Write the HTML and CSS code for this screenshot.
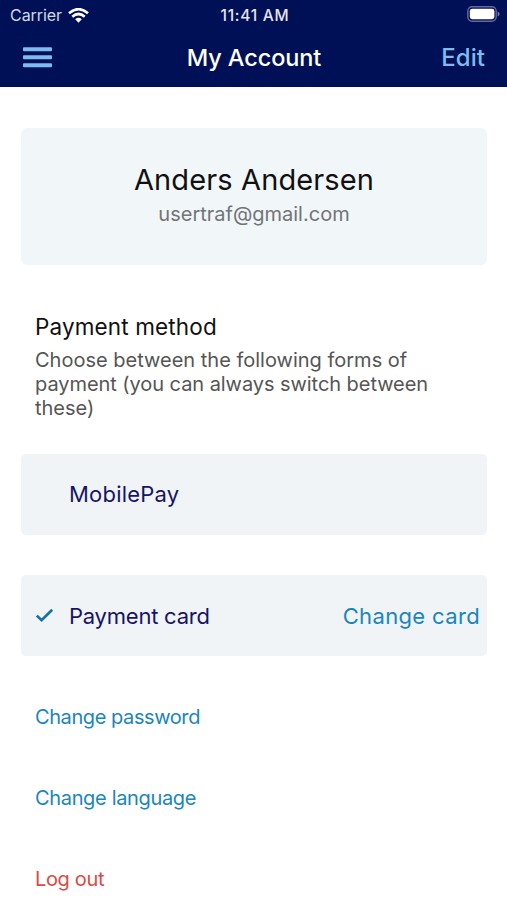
FILE: index.html
```html
<!DOCTYPE html>
<html lang="en">
<head>
<meta charset="utf-8">
<title>My Account</title>
<link rel="stylesheet" href="styles.css">
</head>
<body>
<header class="header">
  <div class="status">
    <div class="carrier"><span class="carrier-name">Carrier</span>
      <svg class="wifi" width="21" height="15" viewBox="0 0 21 15" fill="none" stroke="#fff" stroke-width="2.7"><path d="M1 5.2Q10.5-2.8 20 5.2"/><path d="M4.3 8.7Q10.5 3.3 16.7 8.7"/><path d="M7.2 11.2Q10.5 8.4 13.8 11.2L10.5 14.7Z" fill="#fff" stroke="none"/></svg>
    </div>
    <span class="time">11:41 AM</span>
    <svg class="battery" width="33" height="16" viewBox="0 0 33 16"><rect x=".8" y=".8" width="28.4" height="14.4" rx="4.4" fill="none" stroke="#66699a" stroke-width="1.4"/><rect x="2.8" y="2.8" width="24.6" height="10.4" rx="2.4" fill="#fff"/><path d="M30.7 5.6Q32.6 6.2 32.6 8T30.7 10.4Z" fill="#777aa6"/></svg>
  </div>
  <nav class="nav">
    <svg class="menu" width="29" height="22" viewBox="0 0 29 22" fill="#7dbcef"><rect y=".3" width="29" height="4" rx="1"/><rect y="8.3" width="29" height="4" rx="1"/><rect y="16.3" width="29" height="4" rx="1"/></svg>
    <h1 class="title">My Account</h1>
    <a class="edit">Edit</a>
  </nav>
</header>
<main class="main">
  <section class="profile">
    <h2 class="name">Anders Andersen</h2>
    <p class="email">usertraf@gmail.com</p>
  </section>
  <section class="intro">
    <h3 class="heading">Payment method</h3>
    <p class="copy">Choose between the following forms of<br><span class="line2">payment (you can always switch between</span><br>these)</p>
  </section>
  <div class="card mobile"><span class="mobilepay">MobilePay</span></div>
  <div class="card payment">
    <svg class="check" width="19" height="15" viewBox="0 0 19 15" fill="none" stroke="#1473a0" stroke-width="2.7"><path d="M1.8 7.6L6.6 12.2L17.2 1.8"/></svg>
    <span class="paycard">Payment card</span><a class="change">Change card</a>
  </div>
  <div class="links">
    <a class="link password">Change password</a>
    <a class="link language">Change language</a>
    <a class="link logout">Log out</a>
  </div>
</main>
</body>
</html>
```
FILE: styles.css
```css
* { box-sizing: border-box; }
body { margin: 0; width: 507px; height: 900px; overflow: hidden; background: #fff; font-family: Inter, sans-serif; color: #111; }
h1, h2, h3, p { margin: 0; font-weight: 400; }
span, a { white-space: nowrap; }
.header { height: 87px; background: #001057; color: #fff; }
.status { height: 30px; display: grid; grid-template-columns: 1fr auto 1fr; align-items: center; padding: 0 7px 0 10px; }
.carrier { display: flex; align-items: center; gap: 6px; color: #d5d7e3; font-size: 16px; }
.carrier-name { letter-spacing: -.05px; }
.time { font-size: 15.5px; font-weight: 500; letter-spacing: .75px; color: #e5e6f0; }
.battery { justify-self: end; margin-top: -2px; }
.nav { height: 55px; display: grid; grid-template-columns: 1fr auto 1fr; align-items: center; padding: 0 22px 0 23px; }
.title { font-size: 23.5px; font-weight: 550; letter-spacing: -.1px; }
.edit { justify-self: end; color: #7dbcef; font-size: 24px; font-weight: 550; letter-spacing: .05px; }
.main { padding: 41px 20px 0 21px; }
.profile { height: 137px; border-radius: 6px; background: #f1f6f9; text-align: center; padding-top: 33px; }
.name { font-size: 29px; line-height: 38px; letter-spacing: .13px; }
.email { margin-top: -1px; font-size: 20px; line-height: 32px; color: #727475; }
.intro { height: 189px; padding: 46px 14px 0; }
.heading { font-size: 22.5px; line-height: 32px; letter-spacing: .14px; }
.copy { margin-top: 5px; font-size: 20px; line-height: 24px; color: #555; }
.line2 { letter-spacing: -.06px; }
.card { height: 81px; border-radius: 5px; background: #f0f4f7; display: flex; align-items: center; color: #171467; font-size: 22px; }
.mobile { padding: 0 0 1px 48px; }
.mobilepay { letter-spacing: .22px; }
.payment { margin-top: 40px; padding: 0 7px 0 14px; }
.paycard { letter-spacing: -.23px; }
.check { margin-right: 15px; }
.change { margin-left: auto; color: #1b86ba; letter-spacing: .35px; }
.links { padding: 21px 14px 0; display: flex; flex-direction: column; }
.link { height: 81px; line-height: 81px; font-size: 20px; color: #1b86ba; }
.password { letter-spacing: -.42px; }
.language { letter-spacing: -.34px; }
.logout { color: #db4a45; letter-spacing: -.35px; }
```
